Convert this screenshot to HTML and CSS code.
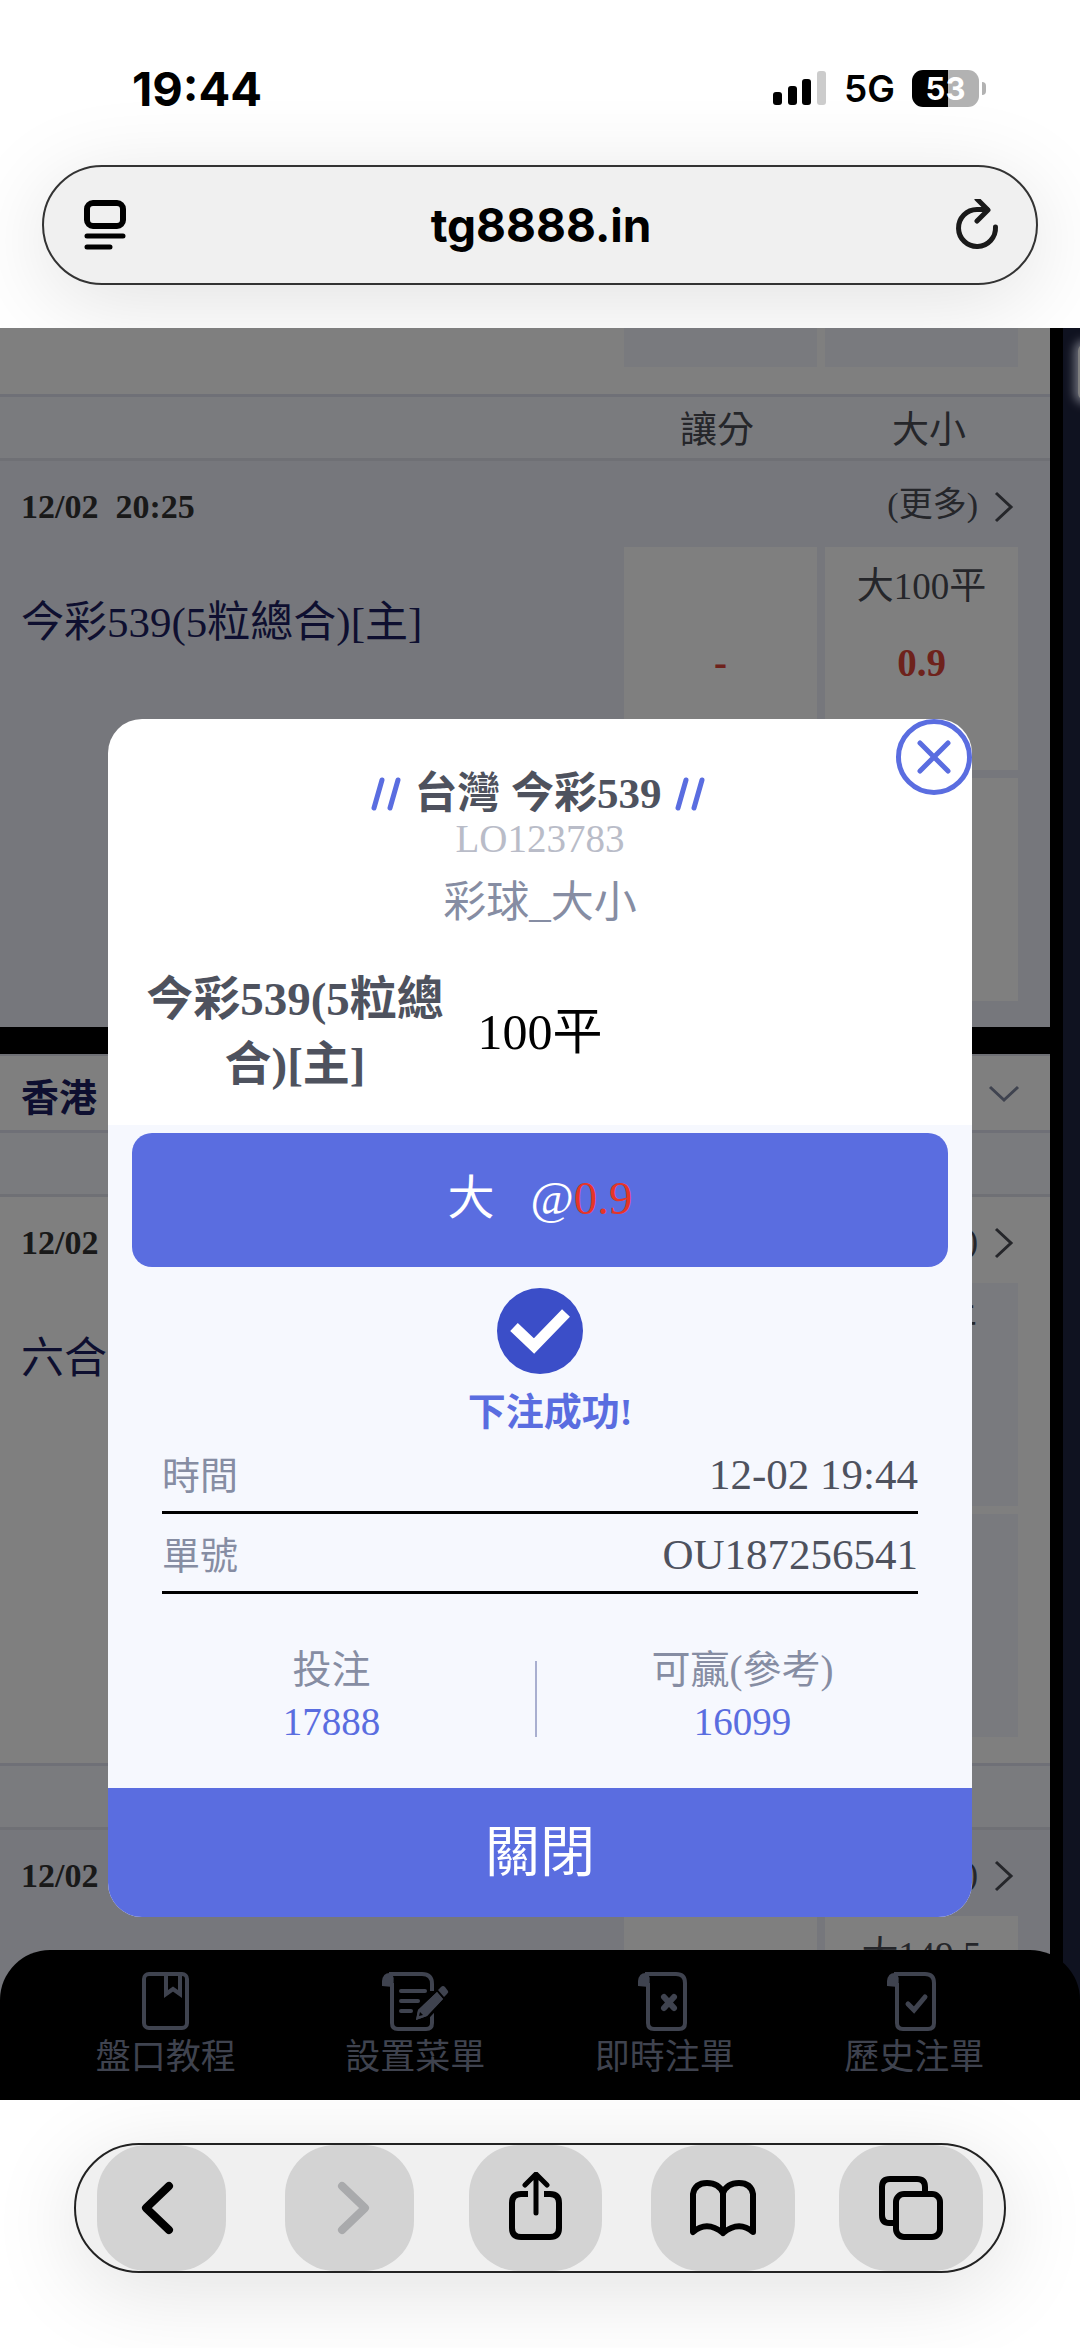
FILE: index.html
```html
<!DOCTYPE html>
<html lang="zh-Hant">
<head>
<meta charset="utf-8">
<meta name="viewport" content="width=device-width, initial-scale=1">
<title>tg8888.in</title>
<link rel="stylesheet" href="styles.css">
</head>
<body>
<header class="browser-top">
  <div class="status">
    <span class="clock">19:44</span>
    <div class="status-right">
      <svg class="signal" width="54" height="34" viewBox="0 0 54 34" aria-hidden="true">
        <rect x="0" y="21" width="9" height="13" rx="3"/>
        <rect x="15" y="15" width="9" height="19" rx="3"/>
        <rect x="29" y="8" width="9" height="26" rx="3"/>
        <rect x="44" y="0" width="9" height="34" rx="3" fill="#ccc"/>
      </svg>
      <span class="network">5G</span>
      <span class="battery">53</span>
    </div>
  </div>
  <form class="url-bar">
    <button type="button" class="url-btn" aria-label="Page menu">
      <svg width="44" height="52" viewBox="0 0 44 52" fill="none" stroke="#000" stroke-width="6">
        <rect x="4" y="4" width="36" height="23" rx="6"/>
        <path d="M4 37H40M4 48H27" stroke-linecap="round" stroke-width="5"/>
      </svg>
    </button>
    <input class="url" type="text" value="tg8888.in" aria-label="Address">
    <button type="button" class="url-btn" aria-label="Reload">
      <svg width="44" height="52" viewBox="0 0 44 52" fill="none" stroke="#1a1a1a" stroke-width="5" stroke-linecap="round" stroke-linejoin="round">
        <path d="M40.500 28A18.500 18.500 0 1 1 22 10.500H32"/>
        <path d="M22 0L33 11L22 22"/>
      </svg>
    </button>
  </form>
</header>

<main class="viewport">
  <div class="panel">
    <section class="league">
      <div class="match-end">
        <div class="cell"></div>
        <div class="cell"></div>
      </div>
      <div class="cols"><span>讓分</span><span>大小</span></div>
      <article class="match shaded">
        <div class="match-head">
          <time class="when">12/02&nbsp; 20:25</time>
          <a class="more" href="#m1"><span>(更多)</span>
            <svg width="20" height="32" viewBox="0 0 20 32"><path d="M2 2L17 16L2 30"/></svg></a>
        </div>
        <div class="match-body">
          <span class="team">今彩539(5粒總合)[主]</span>
          <div class="odds">
            <button class="cell" type="button"><span class="line"></span><b class="price">-</b></button>
            <button class="cell" type="button"><span class="line">大100平</span><b class="price">0.9</b></button>
            <button class="cell" type="button"></button>
            <button class="cell" type="button"></button>
          </div>
        </div>
      </article>
    </section>

    <section class="league">
      <h2 class="league-head">香港
        <svg width="32" height="18" viewBox="0 0 32 18"><path d="M2 2L16 15L30 2"/></svg></h2>
      <div class="cols"></div>
      <article class="match">
        <div class="match-head">
          <time class="when">12/02</time>
          <a class="more" href="#m2"><span>(更多)</span>
            <svg width="20" height="32" viewBox="0 0 20 32"><path d="M2 2L17 16L2 30"/></svg></a>
        </div>
        <div class="match-body">
          <span class="team">六合</span>
          <div class="odds">
            <button class="cell" type="button"></button>
            <button class="cell" type="button"><span class="line">大49平</span></button>
            <button class="cell" type="button"></button>
            <button class="cell" type="button"></button>
          </div>
        </div>
      </article>
      <div class="cols"></div>
      <article class="match shaded">
        <div class="match-head">
          <time class="when">12/02</time>
          <a class="more" href="#m3"><span>(更多)</span>
            <svg width="20" height="32" viewBox="0 0 20 32"><path d="M2 2L17 16L2 30"/></svg></a>
        </div>
        <div class="match-body">
          <span class="team"></span>
          <div class="odds">
            <button class="cell" type="button"></button>
            <button class="cell" type="button"><span class="line">大149.5</span></button>
          </div>
        </div>
      </article>
    </section>
  </div>
  <div class="side-glow"></div>

  <nav class="tabs">
    <a href="#guide">
      <svg width="72" height="62" viewBox="0 0 72 62" fill="none" stroke="currentColor">
        <rect x="14" y="3" width="43" height="54" rx="5" stroke-width="4"/>
        <path d="M36 4V23L43 18L50 23V4" stroke-width="4"/>
      </svg>
      <span>盤口教程</span></a>
    <a href="#menu">
      <svg width="72" height="62" viewBox="0 0 72 62" fill="none" stroke="currentColor" stroke-width="4">
        <path d="M10 3H43Q53 3 53 13V20M53 40V52Q53 58 47 58H19Q13 58 13 52V12"/>
        <path d="M3 15V10Q4 1 12 2Q16 4 14 16Z" fill="currentColor" stroke="none"/>
        <path d="M22 20H46M22 30H39M22 40H32" stroke-linecap="round"/>
        <path d="M58 21L64 28L48 45L37 49L39 39Z" fill="currentColor" stroke="#000" stroke-width="6" paint-order="stroke"/>
        <path d="M58 21L64 28L48 45L37 49L39 39Z" fill="currentColor" stroke="none"/>
        <path d="M59 19L62 16Q64 14 66 16L69 20Q70 21 68 23L65 26Z" fill="currentColor" stroke="none"/>
        <path d="M41 41L44 44L40 45Z" fill="#000" stroke="none"/>
      </svg>
      <span>設置菜單</span></a>
    <a href="#live">
      <svg width="72" height="62" viewBox="0 0 72 62" fill="none" stroke="currentColor" stroke-width="4">
        <path d="M16 3H47Q56 3 56 12V52Q56 58 50 58H25Q19 58 19 52V12"/>
        <path d="M9 15V10Q10 1 18 2Q22 4 20 16Z" fill="currentColor" stroke="none"/>
        <path d="M35 26L45 37M45 26L35 37" stroke-width="6" stroke-linecap="round"/>
      </svg>
      <span>即時注單</span></a>
    <a href="#history">
      <svg width="72" height="62" viewBox="0 0 72 62" fill="none" stroke="currentColor" stroke-width="4">
        <path d="M16 3H47Q56 3 56 12V52Q56 58 50 58H25Q19 58 19 52V12"/>
        <path d="M9 15V10Q10 1 18 2Q22 4 20 16Z" fill="currentColor" stroke="none"/>
        <path d="M30 33L36 39L47 26" stroke-width="5" stroke-linecap="round"/>
      </svg>
      <span>歷史注單</span></a>
  </nav>

  <div class="overlay">
    <div class="modal" role="dialog" aria-label="下注成功">
      <button class="close-x" type="button" aria-label="關閉">
        <svg width="34" height="34" viewBox="0 0 34 34"><path d="M3 3L31 31M31 3L3 31"/></svg>
      </button>
      <div class="modal-head">
        <h1 class="title">
          <svg width="30" height="34" viewBox="0 0 30 34"><path d="M11 3L3 31M27 3L19 31"/></svg>
          <span>台灣 今彩539</span>
          <svg width="30" height="34" viewBox="0 0 30 34"><path d="M11 3L3 31M27 3L19 31"/></svg>
        </h1>
        <p class="game-id">LO123783</p>
        <p class="game-type">彩球_大小</p>
        <div class="versus">
          <strong>今彩539(5粒總合)[主]</strong>
          <span>100平</span>
        </div>
      </div>
      <div class="modal-body">
        <p class="pick"><span>大</span><span>@<em>0.9</em></span></p>
        <svg class="tick" width="88" height="88" viewBox="0 0 88 88">
          <circle cx="44" cy="44" r="43" fill="#3b4ec8"/>
          <path d="M18 40L38 59L70 26" fill="none" stroke="#fff" stroke-width="11"/>
        </svg>
        <p class="success">下注成功!</p>
        <dl class="receipt">
          <div><dt>時間</dt><dd>12-02 19:44</dd></div>
          <div><dt>單號</dt><dd>OU187256541</dd></div>
        </dl>
        <dl class="totals">
          <div><dt>投注</dt><dd>17888</dd></div>
          <div><dt>可贏(參考)</dt><dd>16099</dd></div>
        </dl>
      </div>
      <button class="close-main" type="button">關閉</button>
    </div>
  </div>
</main>

<footer class="browser-bottom">
  <div class="toolbar">
    <button class="tool" type="button" aria-label="Back">
      <svg width="72" height="72" viewBox="0 0 72 72" stroke-width="8"><path d="M43 14L20 36L43 58"/></svg>
    </button>
    <button class="tool" type="button" aria-label="Forward" disabled>
      <svg width="72" height="72" viewBox="0 0 72 72" stroke-width="8"><path d="M29 14L52 36L29 58"/></svg>
    </button>
    <button class="tool wide" type="button" aria-label="Share">
      <svg width="72" height="72" viewBox="0 0 72 72" stroke-width="6"><path d="M28 22H21Q12 22 12 31V56Q12 65 21 65H50Q59 65 59 56V31Q59 22 50 22H44" stroke-linecap="butt"/><path d="M36 41V3M25 13L36 2L47 13" stroke-width="5"/></svg>
    </button>
    <button class="tool widest" type="button" aria-label="Bookmarks">
      <svg width="72" height="72" viewBox="0 0 72 72" stroke-width="6"><path d="M36 61Q20 48 6 60V22Q8 11 20 11Q32 11 36 21Q40 11 52 11Q64 11 66 22V60Q52 48 36 61V21"/></svg>
    </button>
    <button class="tool widest" type="button" aria-label="Tabs">
      <svg width="72" height="72" viewBox="0 0 72 72" stroke-width="6"><rect x="21" y="22" width="44" height="43" rx="8"/><path d="M20 51H14Q7 51 7 43V15Q7 7 15 7H42Q50 7 50 15V21" stroke-linecap="butt"/></svg>
    </button>
  </div>
</footer>
</body>
</html>
```

FILE: styles.css
```css
* {
  box-sizing: border-box;
}

body {
  margin: 0;
  height: 100vh;
  display: flex;
  flex-direction: column;
  background: #fff;
  color: #000;
  font-family: "Liberation Serif", "Noto Sans CJK TC", serif;
}

button,
input {
  margin: 0;
  padding: 0;
  border: 0;
  background: none;
  color: inherit;
  font: inherit;
}

a {
  color: inherit;
  text-decoration: none;
}

h1, h2, p, dl, dd {
  margin: 0;
}

/* Browser chrome, top */
.browser-top {
  flex: none;
  padding: 66px 42px 43px;
  overflow: hidden;
  font-family: Inter, sans-serif;
}

.status {
  display: flex;
  justify-content: space-between;
  align-items: center;
  height: 44px;
  padding: 0 51px 0 90px;
}

.clock {
  font-size: 47px;
  font-weight: 700;
}

.status-right {
  display: flex;
  align-items: center;
  gap: 17px;
}

.network {
  font-size: 37px;
  font-weight: 600;
}

.battery {
  position: relative;
  width: 67px;
  margin-right: 8px;
  border-radius: 11px;
  background: linear-gradient(90deg, #000 54%, #b2b2b2 54%);
  color: #fff;
  font-size: 31px;
  font-weight: 700;
  line-height: 37px;
  text-align: center;
}

.battery::after {
  content: "";
  position: absolute;
  top: 12px;
  right: -7px;
  width: 4px;
  height: 13px;
  border-radius: 0 4px 4px 0;
  background: #b2b2b2;
}

.url-bar {
  display: flex;
  align-items: center;
  height: 120px;
  margin-top: 55px;
  padding: 0 37px 0 39px;
  border: 2px solid #333;
  border-radius: 60px;
  background: #f0f0f0;
  box-shadow: 0 16px 90px rgba(0, 0, 0, 0.12);
}

.url-btn {
  display: flex;
}

.url {
  flex: 1;
  min-width: 0;
  font-size: 46px;
  font-weight: 700;
  text-align: center;
}

/* Betting page */
.viewport {
  position: relative;
  flex: 1;
  min-height: 0;
  overflow: hidden;
  background: #1f2440;
}

.panel {
  margin-right: 17px;
  padding-right: 13px;
  background: #000;
}

.league + .league {
  margin-top: 27px;
}

.match-end {
  display: grid;
  grid-template-columns: 193px 193px;
  gap: 8px;
  justify-content: end;
  height: 66px;
  padding: 0 32px 27px 0;
  background: #fff;
}

.cols {
  display: grid;
  grid-template-columns: 212px 212px;
  justify-content: end;
  height: 67px;
  padding: 3px 15px 0 0;
  border-top: 3px solid #dfe0ee;
  border-bottom: 3px solid #dfe0ea;
  background: #f4f6fc;
  color: #4a4c54;
  font-size: 37px;
  line-height: 61px;
  text-align: center;
}

.league-head {
  display: flex;
  align-items: center;
  justify-content: space-between;
  height: 76px;
  padding: 2px 30px 0 21px;
  border-top: 2px solid #dfe0ea;
  background: #fff;
  color: #1d1f60;
  font-size: 38px;
}

.league-head svg,
.more svg {
  fill: none;
  stroke: currentColor;
  stroke-width: 3;
}

.league-head svg {
  color: #7f869f;
}

.match {
  padding: 0 32px 26px 21px;
  background: #fff;
}

.match-head {
  display: flex;
  align-items: center;
  justify-content: space-between;
  height: 86px;
  padding: 6px 4px 0 0;
  font-size: 34px;
}

.when {
  color: #333;
  font-weight: 700;
}

.more {
  display: flex;
  align-items: center;
  gap: 16px;
  color: #4a4c54;
  line-height: 40px;
}

.more span {
  padding-bottom: 4px;
}

.match-body {
  display: flex;
  justify-content: space-between;
}

.team {
  padding-top: 54px;
  color: #1d1f60;
  font-size: 43px;
  line-height: 44px;
}

.odds {
  display: grid;
  grid-template-columns: 193px 193px;
  grid-auto-rows: 223px;
  gap: 8px;
}

.cell {
  display: flex;
  flex-direction: column;
  align-items: center;
  gap: 32px;
  padding-top: 18px;
  background: #f2f4fc;
  color: #4a4c54;
  font-size: 37px;
  line-height: 44px;
}

.line {
  height: 44px;
}

.price {
  color: #dd4438;
  font-size: 39px;
}

.shaded {
  background: #eceef9;
}

.shaded .cell {
  background: #fff;
}

.side-glow {
  position: absolute;
  top: 16px;
  right: -12px;
  width: 14px;
  height: 56px;
  border-radius: 7px;
  background: #fff;
  box-shadow: 0 0 10px 4px #d5d9f0;
}

.tabs {
  position: absolute;
  right: 0;
  bottom: 0;
  left: 0;
  display: grid;
  grid-template-columns: repeat(4, 1fr);
  height: 150px;
  padding: 21px 41px 0;
  border-radius: 50px 50px 0 0;
  background: #000;
  color: #7f869f;
  font-size: 35px;
  line-height: 44px;
}

.tabs a {
  display: flex;
  flex-direction: column;
  align-items: center;
  gap: 3px;
}

/* Bet receipt dialog */
.overlay {
  position: absolute;
  inset: 0;
  padding: 391px 10% 0;
  background: rgba(0, 0, 0, 0.5);
}

.modal {
  position: relative;
  display: flex;
  flex-direction: column;
  overflow: hidden;
  border-radius: 34px;
  background: #fff;
}

.close-x {
  position: absolute;
  top: 0;
  right: 0;
  display: flex;
  align-items: center;
  justify-content: center;
  width: 76px;
  height: 76px;
  border: 5px solid #5a6de0;
  border-radius: 50%;
  background: #fff;
}

.close-x svg,
.title svg {
  fill: none;
  stroke: #5a6de0;
  stroke-width: 5;
  stroke-linecap: round;
}

.modal-head {
  padding: 51px 33px 28px;
  text-align: center;
}

.title {
  display: flex;
  align-items: center;
  justify-content: center;
  gap: 13px;
  padding-right: 4px;
  color: #4e525e;
  font-size: 43px;
  line-height: 48px;
}

.game-id {
  color: #b9bcc8;
  font-size: 39px;
  line-height: 42px;
}

.game-type {
  padding-top: 10px;
  color: #868da3;
  font-size: 43px;
  line-height: 66px;
}

.versus {
  display: grid;
  grid-template-columns: 1fr 182px 1fr;
  align-items: center;
  padding-top: 31px;
  font-size: 50px;
  line-height: 65px;
}

.versus strong {
  color: #4e525e;
  font-size: 47px;
}

.modal-body {
  display: flex;
  flex-direction: column;
  padding: 8px 24px 40px;
  background: #f6f8fe;
}

.pick {
  display: flex;
  justify-content: center;
  gap: 36px;
  padding-bottom: 4px;
  border-radius: 20px;
  background: #5a6de0;
  color: #fff;
  font-size: 47px;
  line-height: 130px;
}

.pick em {
  color: #e63528;
  font-style: normal;
}

.tick {
  align-self: center;
  margin-top: 20px;
}

.success {
  padding: 15px 0 0 20px;
  color: #5a6de0;
  font-size: 38px;
  font-weight: 700;
  line-height: 44px;
  text-align: center;
}

.receipt {
  padding: 0 30px;
}

.receipt div {
  display: flex;
  align-items: center;
  justify-content: space-between;
  height: 80px;
  border-bottom: 3px solid #000;
}

.receipt dt {
  color: #868da3;
  font-size: 38px;
}

.receipt dd {
  padding-top: 4px;
  color: #4e525e;
  font-size: 43px;
}

.totals {
  display: grid;
  grid-template-columns: 1fr 1fr;
  margin: 50px 0 0 -6px;
  text-align: center;
  font-size: 39px;
  line-height: 52px;
}

.totals div {
  position: relative;
}

.totals div + div::before {
  content: "";
  position: absolute;
  top: 17px;
  left: -2px;
  width: 2px;
  height: 76px;
  background: #a9afd0;
}

.totals dt {
  color: #868da3;
}

.totals dd {
  color: #5a6de0;
}

.close-main {
  background: #5a6de0;
  color: #fff;
  font-size: 55px;
  line-height: 129px;
}

/* Browser chrome, bottom */
.browser-bottom {
  flex: none;
  padding: 43px 74px 75px;
  overflow: hidden;
}

.toolbar {
  display: grid;
  grid-template-columns: 188fr 185fr 182fr 188fr 143fr;
  height: 130px;
  padding: 0 21px;
  border: 2px solid #222;
  border-radius: 65px;
  background: #f0f0f0;
  box-shadow: 0 16px 90px rgba(0, 0, 0, 0.12);
}

.tool {
  display: flex;
  align-items: center;
  justify-content: center;
  width: 129px;
  border-radius: 50px;
  background: #d3d3d3;
}

.tool.wide {
  width: 133px;
}

.tool.widest {
  width: 144px;
}

.tool svg {
  fill: none;
  stroke: #000;
  stroke-linecap: round;
  stroke-linejoin: round;
}

.tool:disabled svg {
  stroke: #a9aaac;
}
```
